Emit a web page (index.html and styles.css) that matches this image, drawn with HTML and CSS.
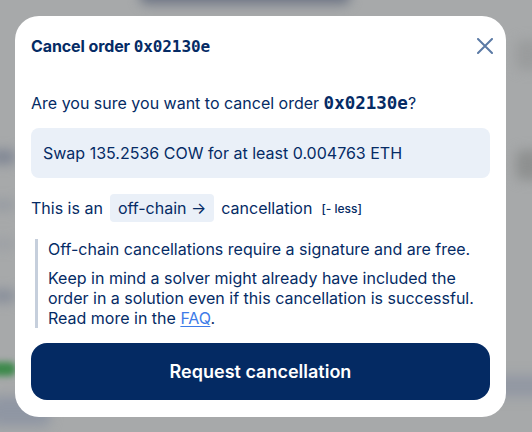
FILE: index.html
```html
<!DOCTYPE html>
<html lang="en">
<head>
<meta charset="utf-8">
<title>Cancel order</title>
<link rel="stylesheet" href="styles.css">
</head>
<body>
<div class="backdrop" aria-hidden="true">
  <div class="blur b-top"></div>
  <div class="blur b-l1"></div>
  <div class="blur b-l2"></div>
  <div class="blur b-l3"></div>
  <div class="blur b-l4"></div>
  <div class="blur b-green"></div>
  <div class="blur b-l5"></div>
  <div class="blur b-r1"></div>
  <div class="blur b-r2"></div>
  <div class="blur b-r3"></div>
</div>
<div class="modal">
  <div class="header">
    <h1 class="title">Cancel order <span class="mono">0x02130e</span></h1>
    <button class="close" aria-label="Close">
      <svg width="16" height="16" viewBox="0 0 16 16"><path d="M1 1 L15 15 M15 1 L1 15" stroke="#5b7aa5" stroke-width="2" stroke-linecap="round" fill="none"/></svg>
    </button>
  </div>
  <p class="question">Are you sure you want to cancel order <strong class="mono mono-q">0x02130e</strong>?</p>
  <div class="summary">Swap 135.2536 COW for at least 0.004763 ETH</div>
  <div class="type-row">
    <span>This is an</span>
    <span class="pill">off-chain →</span>
    <span>cancellation</span>
    <span class="less">[- less]</span>
  </div>
  <div class="note">
    <p>Off-chain cancellations require a signature and are free.</p>
    <p>Keep in mind a solver might already have included the order in a solution even if this cancellation is successful. Read more in the <a href="#">FAQ</a>.</p>
  </div>
  <button class="cta">Request cancellation</button>
</div>
</body>
</html>
```
FILE: styles.css
```css
* { box-sizing: border-box; }
html, body { margin: 0; padding: 0; }
body {
  width: 532px;
  height: 432px;
  overflow: hidden;
  background: #a7a9aa;
  font-family: Inter, "Noto Sans", sans-serif;
  color: #052b65;
  position: relative;
}
.backdrop { position: absolute; inset: 0; overflow: hidden; }
.blur { position: absolute; filter: blur(6px); border-radius: 6px; }
.b-top { left: 140px; top: -14px; width: 210px; height: 18px; background: #6d7484; }
.b-l1 { left: -10px; top: 150px; width: 26px; height: 14px; background: #7e8593; }
.b-l2 { left: -10px; top: 200px; width: 26px; height: 10px; background: #959aa1; }
.b-l3 { left: -10px; top: 290px; width: 26px; height: 12px; background: #858c99; }
.b-l4 { left: -10px; top: 240px; width: 26px; height: 8px; background: #9a9ea4; }
.b-green { left: -10px; top: 362px; width: 26px; height: 14px; background: #3e8a4c; filter: blur(3px); }
.b-l5 { left: -10px; top: 396px; width: 60px; height: 30px; background: #8f96a3; }
.b-r1 { left: 516px; top: 40px; width: 30px; height: 30px; background: #9a9c9d; }
.b-r2 { left: 516px; top: 150px; width: 30px; height: 30px; background: #8e9090; }
.b-r3 { left: 480px; top: 375px; width: 70px; height: 22px; background: #9298a3; }

.modal {
  position: relative;
  margin: 16px 0 0 15px;
  width: 491px;
  height: 401px;
  background: #fff;
  border-radius: 24px;
  padding: 20px 16px 16px;
  display: flex;
  flex-direction: column;
}
.header {
  display: flex;
  align-items: center;
  justify-content: space-between;
  height: 20px;
}
.title {
  margin: 0;
  font-size: 16px;
  font-weight: 700;
  line-height: 20px;
  letter-spacing: -0.1px;
}
.mono { font-family: "DejaVu Sans Mono", monospace; font-weight: 700; }
.title .mono { font-size: 16px; }
.close {
  border: 0;
  background: none;
  padding: 0;
  width: 16px;
  height: 16px;
  margin-right: -3px;
  display: flex;
}
.question {
  margin: 35px 0 0;
  font-size: 16px;
  line-height: 24px;
}
.mono-q { font-size: 17.5px; }
.summary {
  margin-top: 13px;
  height: 50px;
  flex: none;
  background: #eaf0f8;
  border-radius: 8px;
  padding: 0 12px;
  display: flex;
  align-items: center;
  font-size: 16px;
}
.type-row {
  margin-top: 16px;
  display: flex;
  align-items: center;
  gap: 7px;
  font-size: 16px;
  height: 28px;
  flex: none;
}
.pill {
  background: #eaf0f8;
  border-radius: 4px;
  height: 28px;
  padding: 0 8px;
  display: flex;
  align-items: center;
}
.less { font-size: 12px; font-weight: 500; margin-left: 2px; }
.note {
  margin: 17px 0 0 4px;
  border-left: 3px solid #c6cfdc;
  padding: 0 0 0 10px;
  font-size: 16px;
  line-height: 20px;
  flex: none;
}
.note p { margin: 0; }
.note p + p { margin-top: 9px; }
.note a { color: #3d7be8; text-decoration: underline; text-underline-offset: 2px; }
.cta {
  margin-top: 15px;
  height: 57px;
  flex: none;
  border: 0;
  border-radius: 16px;
  background: #042a63;
  color: #fff;
  font-family: Inter, sans-serif;
  font-size: 18px;
  font-weight: 600;
  width: 100%;
}
```
